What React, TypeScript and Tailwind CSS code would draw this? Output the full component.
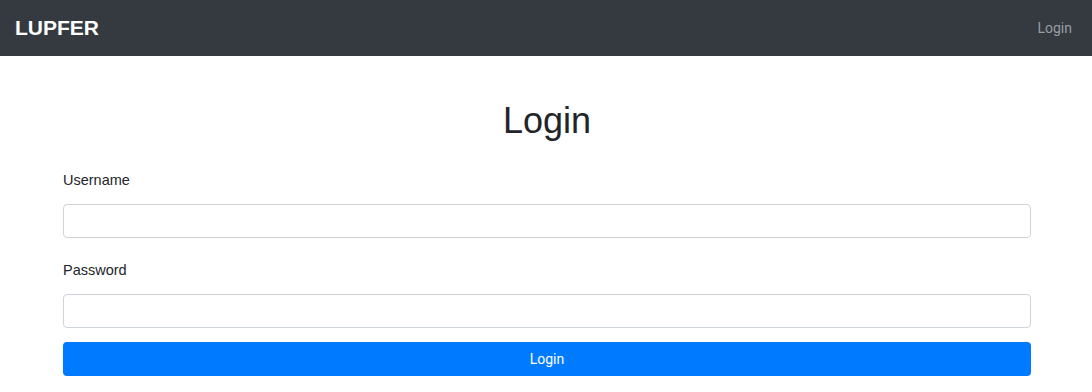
export default function App() {
  return (
    <div className="min-h-screen bg-white font-['Liberation_Sans',Arial,sans-serif] text-[#212529]">
      <nav className="flex h-14 items-center justify-between bg-[#343a40] pl-[15px] pr-5">
        <a href="#" className="text-[21px] font-bold text-white">
          LUPFER
        </a>
        <a href="#" className="font-['Roboto',sans-serif] text-[14px] text-[#9a9da0]">
          Login
        </a>
      </nav>
      <div className="pl-[63px] pr-[61px]">
        <h1 className="mt-[41px] mb-[23px] text-center text-[36px] leading-[48px]">Login</h1>
        <form>
          <label className="mb-3 block text-[14.5px] leading-6">Username</label>
          <input
            type="text"
            className="block h-[34px] w-full rounded border border-[#ced4da] px-3"
          />
          <label className="mt-5 mb-3 block text-[14.5px] leading-6">Password</label>
          <input
            type="password"
            className="block h-[34px] w-full rounded border border-[#ced4da] px-3"
          />
          <button
            type="button"
            className="mt-[14px] block h-[34px] w-full rounded bg-[#007bff] font-['Roboto',sans-serif] text-[14px] text-white"
          >
            Login
          </button>
        </form>
      </div>
    </div>
  );
}
